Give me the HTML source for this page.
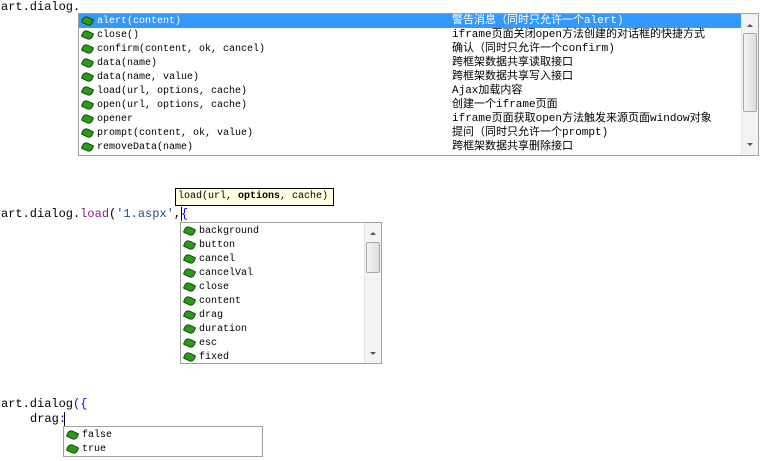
<!DOCTYPE html>
<html><head><meta charset="utf-8"><style>
*{margin:0;padding:0;box-sizing:border-box}
body{width:766px;height:461px;background:#fff;position:relative;overflow:hidden;font-family:"Liberation Mono","Noto Sans CJK SC",monospace}
.code{position:absolute;font-size:12px;color:#000;line-height:14px;white-space:pre;font-family:"Liberation Mono",monospace}
.box{position:absolute;border:1px solid #a0a0a0;background:#fff}
.row{position:absolute;left:0;height:14px;line-height:14px;font-size:10px;white-space:pre;font-family:"Liberation Mono","Noto Sans CJK SC",monospace;color:#000}
.row .ic{position:absolute;left:3px;top:3px;width:11px;height:8px;background:#2e9a1a;border-radius:4px 1px 4px 1px;transform:rotate(25deg);border:1px solid #0c4a08}
.row .t{position:absolute;left:18px;top:1px}
.row .d{position:absolute;font-size:11px}
.sel{background:#3399ff;color:#fff}
.sb{position:absolute;background:#f3f3f3;border-left:1px solid #e6e6e6}
.thumb{position:absolute;left:1px;right:1px;background:linear-gradient(90deg,#f4f4f4,#dcdcdc);border:1px solid #a8a8a8;border-radius:2px}
.ar{position:absolute;left:5px;width:0;height:0;border-left:3px solid transparent;border-right:3px solid transparent}
.caret{position:absolute;width:1px;height:14px;background:#000}
</style></head><body>
<div class="code" style="left:1px;top:0">art.dialog.</div>

<div class="box" style="left:78px;top:13px;width:681px;height:143px">
 <div class="row sel" style="top:0;width:662px"><span class="ic"></span><span class="t">alert(content)</span><span class="d" style="left:373px">警告消息（同时只允许一个alert)</span></div>
 <div class="row" style="top:14px;width:662px"><span class="ic"></span><span class="t">close()</span><span class="d" style="left:373px">iframe页面关闭open方法创建的对话框的快捷方式</span></div>
 <div class="row" style="top:28px;width:662px"><span class="ic"></span><span class="t">confirm(content, ok, cancel)</span><span class="d" style="left:373px">确认（同时只允许一个confirm)</span></div>
 <div class="row" style="top:42px;width:662px"><span class="ic"></span><span class="t">data(name)</span><span class="d" style="left:373px">跨框架数据共享读取接口</span></div>
 <div class="row" style="top:56px;width:662px"><span class="ic"></span><span class="t">data(name, value)</span><span class="d" style="left:373px">跨框架数据共享写入接口</span></div>
 <div class="row" style="top:70px;width:662px"><span class="ic"></span><span class="t">load(url, options, cache)</span><span class="d" style="left:373px">Ajax加载内容</span></div>
 <div class="row" style="top:84px;width:662px"><span class="ic"></span><span class="t">open(url, options, cache)</span><span class="d" style="left:373px">创建一个iframe页面</span></div>
 <div class="row" style="top:98px;width:662px"><span class="ic"></span><span class="t">opener</span><span class="d" style="left:373px">iframe页面获取open方法触发来源页面window对象</span></div>
 <div class="row" style="top:112px;width:662px"><span class="ic"></span><span class="t">prompt(content, ok, value)</span><span class="d" style="left:373px">提问（同时只允许一个prompt)</span></div>
 <div class="row" style="top:126px;width:662px"><span class="ic"></span><span class="t">removeData(name)</span><span class="d" style="left:373px">跨框架数据共享删除接口</span></div>
 <div class="sb" style="left:662px;top:0;width:17px;height:141px">
  <div class="ar" style="top:10px;border-bottom:3px solid #555"></div>
  <div class="thumb" style="top:19px;height:79px"></div>
  <div class="ar" style="top:129px;border-top:3px solid #555"></div>
 </div>
</div>

<div style="position:absolute;left:175px;top:188px;width:159px;height:18px;background:#ffffe1;border:1px solid #000;font-size:10px;line-height:16px;padding-left:2px;white-space:pre">load(url, <b>options</b>, cache)</div>

<div class="code" style="left:1px;top:207px">art.dialog.<span style="color:#8b1a8b">load</span>(<span style="color:#1c4f8c">'1.aspx'</span>,<span style="color:#0000ff">{</span></div>
<div class="caret" style="left:181px;top:207px"></div>

<div class="box" style="left:180px;top:222px;width:202px;height:142px">
 <div class="row" style="top:1px;width:183px"><span class="ic"></span><span class="t">background</span></div>
 <div class="row" style="top:15px;width:183px"><span class="ic"></span><span class="t">button</span></div>
 <div class="row" style="top:29px;width:183px"><span class="ic"></span><span class="t">cancel</span></div>
 <div class="row" style="top:43px;width:183px"><span class="ic"></span><span class="t">cancelVal</span></div>
 <div class="row" style="top:57px;width:183px"><span class="ic"></span><span class="t">close</span></div>
 <div class="row" style="top:71px;width:183px"><span class="ic"></span><span class="t">content</span></div>
 <div class="row" style="top:85px;width:183px"><span class="ic"></span><span class="t">drag</span></div>
 <div class="row" style="top:99px;width:183px"><span class="ic"></span><span class="t">duration</span></div>
 <div class="row" style="top:113px;width:183px"><span class="ic"></span><span class="t">esc</span></div>
 <div class="row" style="top:127px;width:183px"><span class="ic"></span><span class="t">fixed</span></div>
 <div class="sb" style="left:183px;top:0;width:17px;height:140px">
  <div class="ar" style="top:9px;border-bottom:3px solid #555"></div>
  <div class="thumb" style="top:19px;height:31px"></div>
  <div class="ar" style="top:129px;border-top:3px solid #555"></div>
 </div>
</div>

<div class="code" style="left:1px;top:397px">art.dialog<span style="color:#0000ff">({</span></div>
<div class="code" style="left:30px;top:412px">drag<span style="color:#0000ff">:</span></div>
<div class="caret" style="left:64px;top:412px"></div>

<div class="box" style="left:63px;top:426px;width:200px;height:31px">
 <div class="row" style="top:1px;width:198px"><span class="ic"></span><span class="t">false</span></div>
 <div class="row" style="top:15px;width:198px"><span class="ic"></span><span class="t">true</span></div>
</div>
</body></html>
